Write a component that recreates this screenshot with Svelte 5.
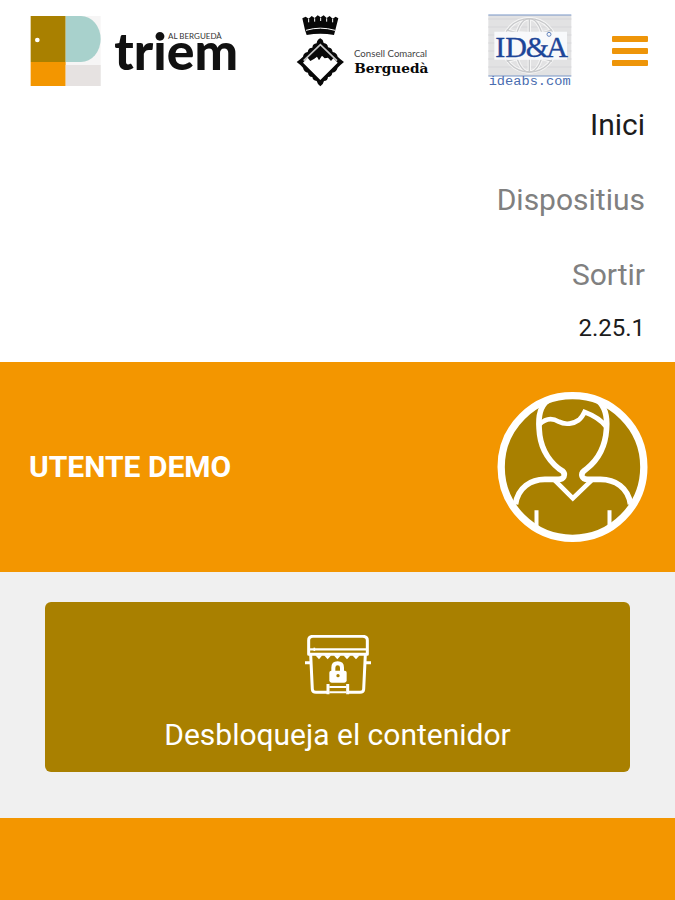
<script>
  let open = $state(true);
  const links = [
    { label: 'Inici', href: '#inici', active: true },
    { label: 'Dispositius', href: '#dispositius', active: false },
    { label: 'Sortir', href: '#sortir', active: false }
  ];
</script>

<div class="page">
  <header>
    <div class="bar">
      <div class="logos">
        <svg class="triem" viewBox="30 27 624 219" role="img" aria-label="Triem al Berguedà">
          <path d="M137 33h105v210H137z" fill="#f6f5f5" />
          <path d="M32 33h105v138H32z" fill="#a98000" />
          <path d="M137 33h46a59 69 0 0 1 0 138h-46z" fill="#a8d1cc" />
          <path d="M32 171h105v72H32z" fill="#f39600" />
          <path d="M137 180h105v63H137z" fill="#e6e2e1" />
          <circle cx="52" cy="105" r="7" fill="#fff" />
          <text class="triem-name" x="283" y="194">triem</text>
          <text class="triem-place" x="444" y="101">AL BERGUEDÀ</text>
        </svg>
        <svg class="consell" viewBox="22 27 396 219" role="img" aria-label="Consell Comarcal Berguedà">
          <path d="M38 40l10-5 9 6 9-8 9 6 9-8 9 6 9-6 9 8 9-6 9 8 9-6 8 5-9 35-4 15q-41-8-82 0l-5-15z" fill="#080808" />
          <path d="M57 42v10M75 40v10M93 38v10M111 40v10M129 42v10" stroke="#fff" stroke-width="3" />
          <path d="M49 76q43-13 87 0" fill="none" stroke="#fff" stroke-width="3" />
          <path d="M92 100q9 4 10 14 12 1 13 13 12 1 14 14 12 2 15 14 8 8 19 16-11 9-19 17-4 13-16 15-1 12-13 13-1 12-12 12-2 10-11 16-9-7-11-16-12-1-13-12-12-1-13-13-12-2-15-15-8-9-19-17 11-8 19-16 2-12 14-14 2-13 14-13 1-12 13-13 1-11 11-15z" fill="#080808" />
          <path d="M42 167L92 119L142 167" fill="none" stroke="#c4c4c4" stroke-width="5" />
          <path d="M40 173L54 158L62 168L74 161L82 155L88 166L97 152L105 160L115 158L124 168L131 160L144 173L92 225Z" fill="#fff" />
          <text class="consell-top" x="193" y="157">Consell Comarcal</text>
          <text class="consell-name" x="194" y="203">Berguedà</text>
        </svg>
        <svg class="idea" viewBox="24 27 252 219" role="img" aria-label="ID&A ideabs.com">
          <path d="M25 30h249v183H25z" fill="#e2e2e3" />
          <path d="M25 42h249M25 66h249M25 90h249M25 114h249M25 138h249M25 162h249M25 186h249" stroke="#dadadd" stroke-width="4" />
          <g fill="none" stroke="#f6f6f6" stroke-width="10">
            <circle cx="148" cy="121" r="80" />
            <ellipse cx="148" cy="121" rx="42" ry="80" />
            <path d="M148 41v160M80 75q68 24 136 0M80 169q68-24 136 0" />
          </g>
          <g fill="none" stroke="#c8c9cb" stroke-width="4">
            <circle cx="148" cy="121" r="80" />
            <ellipse cx="148" cy="121" rx="42" ry="80" />
            <path d="M148 41v160M80 75q68 24 136 0M80 169q68-24 136 0" />
          </g>
          <path d="M43 80h218v84H43z" fill="#f8f9fb" />
          <text class="idea-name" x="46" y="156">ID<tspan dx="-4">&amp;</tspan><tspan dx="-8">A</tspan></text>
          <circle cx="207" cy="88" r="6" fill="none" stroke="#6585bd" stroke-width="3" />
          <path d="M25 30h249M25 213h249" stroke="#7794c5" stroke-width="3" />
          <text class="idea-site" x="26" y="241">ideabs.com</text>
        </svg>
      </div>
      <button class="burger" type="button" aria-label="Menú" aria-expanded={open} onclick={() => (open = !open)}>
        <span></span><span></span><span></span>
      </button>
    </div>
    {#if open}
      <nav>
        {#each links as link}
          <a href={link.href} class:active={link.active}>{link.label}</a>
        {/each}
      </nav>
      <p class="version">2.25.1</p>
    {/if}
  </header>

  <section class="user">
    <h1>UTENTE DEMO</h1>
    <svg class="avatar" viewBox="21 21 450 450" fill="none" stroke="#fff" stroke-width="17" aria-hidden="true">
      <circle cx="246" cy="246" r="214" fill="#a98000" stroke-width="22" />
      <path d="M171 47C147 65 143 96 146 132C148 181 169 222 205 251L216 258Q224 265 220 275Q216 283 203 283H163C122 283 82 307 75 358" />
      <path d="M322 47C345 66 351 95 348 132C345 181 325 222 289 251L280 258Q272 264 275 274Q278 283 292 283H330C373 283 413 307 420 358" />
      <path d="M147 118C166 99 187 99 205 110C225 121 250 116 265 105Q274 98 282 81C309 91 330 102 348 126" stroke-width="14" />
      <path d="M193 286L247 340L303 286" stroke-width="14" />
      <path d="M138 376V434M357 376V434" stroke-width="12" />
    </svg>
  </section>

  <main>
    <button class="unlock" type="button">
      <svg viewBox="30 30 198 180" fill="none" stroke="#fff" stroke-width="9" stroke-linejoin="round" aria-hidden="true">
        <path d="M41 88V46Q41 34 54 34H203Q217 34 217 46V88Z" />
        <path d="M45 73H213" stroke-width="7" />
        <path d="M58 68v10" stroke-width="5" />
        <path d="M47 89L52 193Q53 202 63 202H99M158 202H195Q205 202 206 193L211 89" />
        <path d="M61 91h21l-10 12zM87 91h22l-11 12zM116 91h22l-11 12zM145 91h22l-11 12zM172 91h22l-11 12z" fill="#fff" stroke="none" />
        <path d="M30 113H47M211 113H228" />
        <path d="M99 177V208M158 177V208" />
        <path d="M103 186H154M103 202H154" stroke-width="6" />
        <path d="M115 139V128Q115 115 128 115Q141 115 141 128V139" stroke-width="12" />
        <path d="M109 137H149Q155 137 155 143V166Q155 173 148 173H110Q103 173 103 166V143Q103 137 109 137Z" fill="#fff" stroke="none" />
        <circle cx="129" cy="152" r="5" fill="#a98000" stroke="none" />
      </svg>
      <span>Desbloqueja el contenidor</span>
    </button>
  </main>
  <footer></footer>
</div>

<style>
  .page {
    display: flex;
    flex-direction: column;
    min-height: 100vh;
    background: #f0f0f0;
    font-family: Roboto, "Liberation Sans", sans-serif;
  }
  header {
    background: #fff;
    padding-bottom: 17px;
  }
  .bar {
    display: flex;
    align-items: center;
    justify-content: space-between;
    padding: 14px 27px 0 30px;
  }
  .logos {
    display: flex;
    gap: 59px;
  }
  .logos svg {
    height: 73px;
    overflow: visible;
  }
  .triem { width: 208px; }
  .consell { width: 132px; }
  .idea { width: 84px; }
  .triem-name {
    font: 900 155px Lato, sans-serif;
    fill: #111;
  }
  .triem-place {
    font: 24px Lato, sans-serif;
    fill: #333;
  }
  .consell-top {
    font: 29px Lato, sans-serif;
    fill: #444;
  }
  .consell-name {
    font: bold 41px "DejaVu Serif", serif;
    fill: #080808;
  }
  .idea-name {
    font: 90px "Liberation Serif", serif;
    fill: #1d4598;
    stroke: #1d4598;
    stroke-width: 1px;
  }
  .idea-site {
    font: 41px "Liberation Mono", monospace;
    fill: #4a6db0;
  }
  .burger {
    display: flex;
    flex-direction: column;
    gap: 6px;
    width: 36px;
    padding: 0;
    border: 0;
    background: none;
    cursor: pointer;
  }
  .burger span {
    height: 6px;
    border-radius: 1px;
    background: #ee9509;
  }
  nav {
    display: flex;
    flex-direction: column;
    align-items: flex-end;
    padding: 0 30px;
  }
  nav a {
    color: #808080;
    font-size: 30px;
    line-height: 75px;
    text-decoration: none;
  }
  nav a.active {
    color: #1c1c1c;
  }
  .version {
    margin: 0;
    padding: 0 30px;
    color: #1c1c1c;
    font-size: 24px;
    line-height: 33px;
    text-align: right;
  }
  .user {
    display: flex;
    align-items: center;
    justify-content: space-between;
    padding: 30px 27px 30px 29px;
    background: #f39600;
  }
  h1 {
    margin: 0;
    color: #fff;
    font-size: 30px;
    line-height: 36px;
  }
  .avatar {
    width: 151px;
    height: 150px;
  }
  main {
    padding: 30px 45px 46px;
  }
  .unlock {
    display: flex;
    flex-direction: column;
    align-items: center;
    gap: 22px;
    width: 100%;
    padding: 33px 20px 19px;
    border: 0;
    border-radius: 6px;
    background: #a98000;
    color: #fff;
    font: 30px/36px Roboto, "Liberation Sans", sans-serif;
    cursor: pointer;
  }
  .unlock svg {
    width: 66px;
    height: 60px;
  }
  footer {
    flex: 1;
    background: #f39600;
  }
</style>
